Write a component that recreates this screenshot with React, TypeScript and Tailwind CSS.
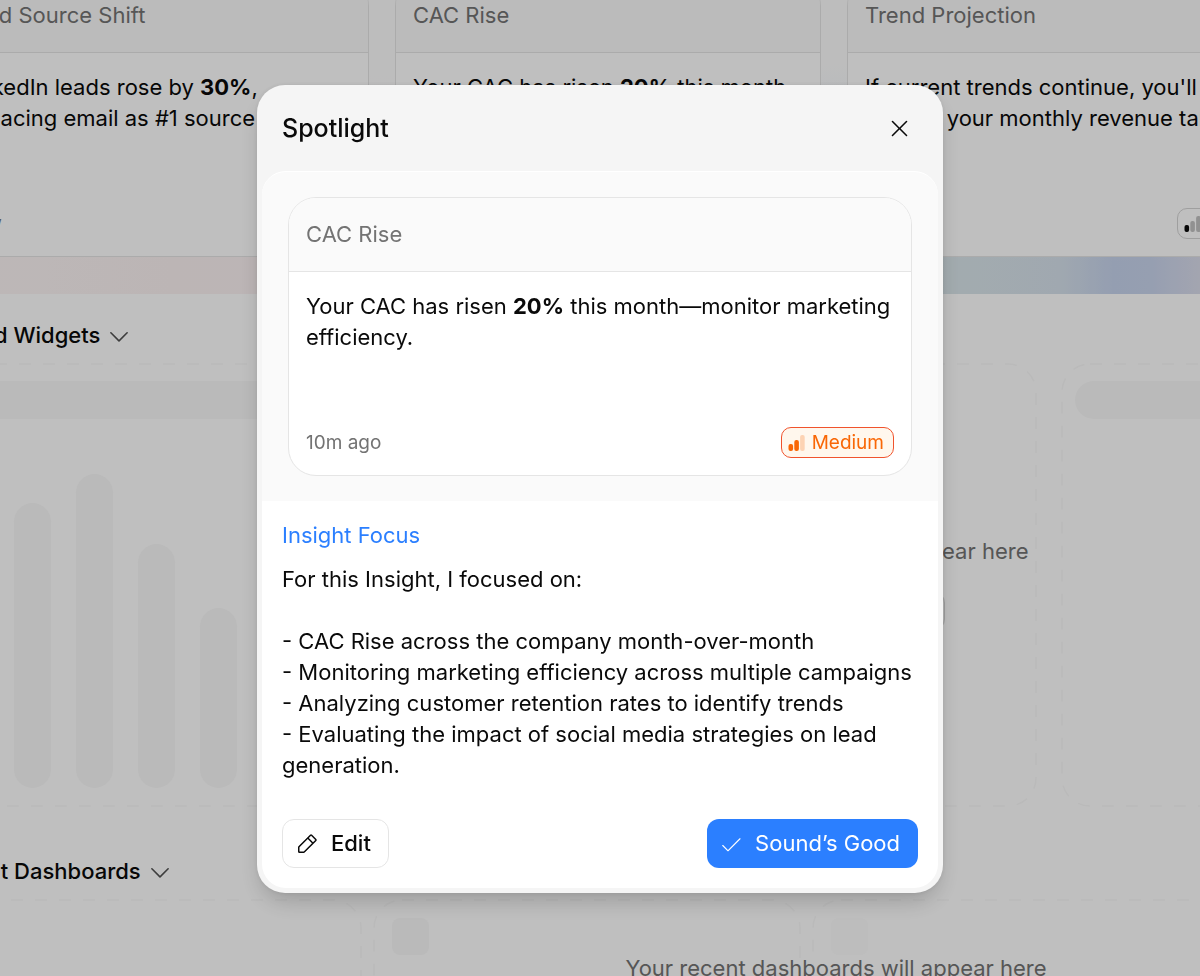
import { ReactNode } from "react";
import { PiCaretDown, PiCheckLight, PiPencilSimple, PiX } from "react-icons/pi";

type Level = "Low" | "Medium";

const focusItems = [
    "CAC Rise across the company month-over-month",
    "Monitoring marketing efficiency across multiple campaigns",
    "Analyzing customer retention rates to identify trends",
    "Evaluating the impact of social media strategies on lead generation.",
];

export default function App() {
    return (
        <div className="relative h-screen overflow-hidden bg-white font-['Inter',sans-serif] text-[22px] leading-[31px] text-neutral-950">
            <Dashboard />
            <div className="fixed inset-0 bg-black/25" />
            <div className="fixed inset-0 flex items-center justify-center pt-[2px]">
                <SpotlightDialog />
            </div>
        </div>
    );
}

function Dashboard() {
    return (
        <main className="-ml-[57px] min-w-[1786px]">
            {/* Insights, scrolled partly out of view */}
            <section className="relative -mt-[22px] -ml-6 bg-neutral-50 pb-[37px] pl-6">
                <div className="absolute inset-0 bg-[linear-gradient(90deg,#fcf6f6_0%,#fbf2f2_14%,#fbf2f3_20%,#f4f4fa_35%,#e4ebf6_48%,#d9e5ea_57%,#d6e1eb_63%,#c6d3ec_66%,#c8d4ed_68%,#e2e0ea_72%,#f4eef2_100%)]" />
                <div className="absolute inset-0 bg-[linear-gradient(180deg,#fdfdfd_0%,#fdfdfd_25%,transparent_90%)]" />
                <div className="relative flex gap-[26px]">
                    <InsightCard title="Lead Source Shift" time="Now" level="Low" className="w-[426px]">
                        LinkedIn leads rose by <b className="font-bold">30%</b>,<br />replacing email as #1 source
                    </InsightCard>
                    <InsightCard title="CAC Rise" time="10m ago" level="Medium" className="w-[426px]">
                        Your CAC has risen <b className="font-bold">20%</b> this month—monitor marketing efficiency.
                    </InsightCard>
                    <InsightCard title="Trend Projection" time="1h ago" level="Low" className="w-[426px]">
                        If current trends continue, you'll exceed your monthly revenue target.
                    </InsightCard>
                </div>
            </section>

            <section className="mt-[26px]">
                <SectionTitle>Pinned Widgets</SectionTitle>
                <div className="relative mt-[13px] flex gap-[26px]">
                    <WidgetPlaceholder header bars />
                    <WidgetPlaceholder />
                    <WidgetPlaceholder />
                    <WidgetPlaceholder header />
                    <div className="absolute inset-0 flex flex-col items-center justify-center gap-6 pb-1 text-neutral-500">
                        <p>Your pinned widgets will appear here</p>
                        <button className="h-10 w-[218px] rounded-xl border border-neutral-300 bg-neutral-100">Browse widgets</button>
                    </div>
                </div>
            </section>

            <section className="mt-[50px]">
                <SectionTitle>Recent Dashboards</SectionTitle>
                <div className="relative mt-[13px] -ml-2 flex gap-[13px]">
                    {[0, 1, 2, 3].map(i => (
                        <div key={i} className="relative h-40 w-[426px] shrink-0 p-[18px]">
                            <DashedOutline />
                            <div className={`size-[37px] rounded-lg ${i > 1 ? "bg-[#fcfcfc]" : "bg-[#f9f9f9]"}`} />
                        </div>
                    ))}
                    <p className="absolute top-[53px] right-0 left-2 text-center text-neutral-500">Your recent dashboards will appear here</p>
                </div>
            </section>
        </main>
    );
}

function SectionTitle({ children }: { children: ReactNode }) {
    return (
        <h2 className="-ml-2 flex items-center gap-[6px] font-medium">
            {children}
            <PiCaretDown size={26} className="text-neutral-600" />
        </h2>
    );
}

function DashedOutline() {
    return (
        <svg className="pointer-events-none absolute inset-0 size-full overflow-visible" aria-hidden="true">
            <rect width="100%" height="100%" rx="28" fill="none" stroke="#f9f9f9" strokeWidth="1.5" strokeDasharray="12 12" />
        </svg>
    );
}

function WidgetPlaceholder({ header, bars }: { header?: boolean; bars?: boolean }) {
    return (
        <div className="relative flex h-[442px] w-[347px] shrink-0 flex-col justify-between px-[13px] pt-[17px] pb-[18px]">
            <DashedOutline />
            {header && <div className="h-[38px] rounded-full bg-[#f9f9f9]" />}
            {bars && (
                <div className="flex items-end justify-center gap-[25px] pl-[18px]">
                    <div className="h-[285px] w-[37px] rounded-full bg-[#f9f9f9]" />
                    <div className="h-[314px] w-[37px] rounded-full bg-[#f9f9f9]" />
                    <div className="h-[244px] w-[37px] rounded-full bg-[#f9f9f9]" />
                    <div className="h-[180px] w-[37px] rounded-full bg-[#f9f9f9]" />
                </div>
            )}
        </div>
    );
}

function InsightCard({ title, time, level, className, children }: { title: string; time: string; level: Level; className?: string; children: ReactNode }) {
    return (
        <article className={`flex h-[279px] shrink-0 flex-col overflow-hidden rounded-[28px] border border-neutral-200 bg-white ${className ?? ""}`}>
            <h3 className="flex h-[74px] shrink-0 items-center border-b border-neutral-200 bg-[#fafafa] px-[17px] text-neutral-500">{title}</h3>
            <p className="grow px-[17px] pt-[19px]">{children}</p>
            <div className="flex items-center justify-between px-[17px] pb-[17px] text-[19px]">
                <span className="text-neutral-500">{time}</span>
                <LevelBadge level={level} />
            </div>
        </article>
    );
}

function LevelBadge({ level }: { level: Level }) {
    const medium = level === "Medium";
    return (
        <span className={`flex h-[31px] items-center gap-[7px] rounded-[10px] border px-[6px] pr-[9px] ${medium ? "border-[#f0532d] bg-orange-50 text-[#f96706]" : "border-neutral-300"}`}>
            <svg width="17" height="18" viewBox="0 0 17 18" fill="currentColor" aria-hidden="true">
                <rect x="0.5" y="10" width="4.6" height="7" rx="2" />
                <rect x="6.3" y="6" width="4.6" height="11" rx="2" opacity={medium ? 1 : 0.25} />
                <rect x="12.1" y="1" width="4.6" height="16" rx="2" opacity="0.25" />
            </svg>
            {level}
        </span>
    );
}

function SpotlightDialog() {
    return (
        <div role="dialog" aria-labelledby="spotlight-title" className="w-full max-w-[686px] rounded-[28px] bg-neutral-100 p-[5px] pt-0 shadow-[0_12px_24px_-6px_rgba(0,0,0,0.22),0_0_5px_rgba(0,0,0,0.08)]">
            <header className="flex h-[86px] items-center justify-between px-5">
                <h2 id="spotlight-title" className="text-[25px] font-medium">Spotlight</h2>
                <button aria-label="Close" className="-mr-[2px] p-2">
                    <PiX size={25} />
                </button>
            </header>
            <div className="overflow-hidden rounded-[24px] border-t border-white bg-white">
                <div className="bg-neutral-50 px-[26px] py-[25px]">
                    <InsightCard title="CAC Rise" time="10m ago" level="Medium">
                        Your CAC has risen <b className="font-bold">20%</b> this month—monitor marketing efficiency.
                    </InsightCard>
                </div>
                <div className="px-5 pt-[19px] pb-5">
                    <h3 className="text-blue-500">Insight Focus</h3>
                    <div className="mt-[13px]">
                        <p className="mb-[31px]">For this Insight, I focused on:</p>
                        {focusItems.map(item => (
                            <p key={item}>- {item}</p>
                        ))}
                    </div>
                    <div className="mt-[38px] flex justify-between">
                        <button className="flex h-[49px] items-center gap-3 rounded-xl border border-neutral-200 px-[17px] pl-3 font-medium">
                            <PiPencilSimple size={24} />
                            Edit
                        </button>
                        <button className="flex h-[49px] items-center gap-3 rounded-xl bg-blue-500 px-[18px] pl-3 text-white">
                            <PiCheckLight size={24} />
                            Sound’s Good
                        </button>
                    </div>
                </div>
            </div>
        </div>
    );
}
